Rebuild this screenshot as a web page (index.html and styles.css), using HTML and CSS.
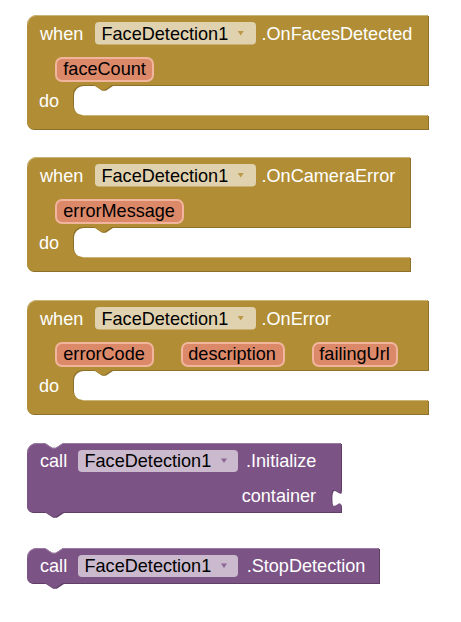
FILE: index.html
```html
<!DOCTYPE html>
<html lang="en">
<head>
<meta charset="utf-8">
<title>FaceDetection1 blocks</title>
<link rel="stylesheet" href="styles.css">
</head>
<body>
<div class="workspace">

  <svg class="block" width="403" height="114" viewBox="0 0 403 114">
    <path class="ev-dark" transform="translate(1,1)" d="M0,9.6 A9.6,9.6 0 0 1 9.6,0 H401 V70 H85 l-7.2,4.8 h-3.6 l-7.2,-4.8 H55.6 A9.6,9.6 0 0 0 46,79.6 V90.4 A9.6,9.6 0 0 0 55.6,100 H401 V114 H6 A6,6 0 0 1 0,108 Z"/>
    <path class="ev-fill" d="M0,9.6 A9.6,9.6 0 0 1 9.6,0 H401 V70 H85 l-7.2,4.8 h-3.6 l-7.2,-4.8 H55.6 A9.6,9.6 0 0 0 46,79.6 V90.4 A9.6,9.6 0 0 0 55.6,100 H401 V114 H6 A6,6 0 0 1 0,108 Z"/>
    <path class="ev-light" d="M0.5,9.6 A9.1,9.1 0 0 1 9.6,0.5 H400.5 M55.6,100.5 H400.5"/>
    <text class="lbl" x="13" y="25">when</text>
    <rect class="ev-field" x="68" y="7" width="161" height="22.5" rx="4"/>
    <text class="fld" x="74.5" y="25">FaceDetection1</text>
    <polygon class="ev-arrow" points="210.7,16 216.7,16 213.7,20.5"/>
    <text class="lbl" x="234.5" y="25">.OnFacesDetected</text>
    <rect class="param" x="29" y="43" width="97" height="23" rx="6"/>
    <text class="fld" x="36.3" y="59.5">faceCount</text>
    <text class="lbl" x="12" y="92">do</text>
  </svg>

  <svg class="block" width="385" height="115" viewBox="0 0 385 115">
    <path class="ev-dark" transform="translate(1,1)" d="M0,9.6 A9.6,9.6 0 0 1 9.6,0 H383 V70 H85 l-7.2,4.8 h-3.6 l-7.2,-4.8 H55.6 A9.6,9.6 0 0 0 46,79.6 V90.4 A9.6,9.6 0 0 0 55.6,100 H383 V114 H6 A6,6 0 0 1 0,108 Z"/>
    <path class="ev-fill" d="M0,9.6 A9.6,9.6 0 0 1 9.6,0 H383 V70 H85 l-7.2,4.8 h-3.6 l-7.2,-4.8 H55.6 A9.6,9.6 0 0 0 46,79.6 V90.4 A9.6,9.6 0 0 0 55.6,100 H383 V114 H6 A6,6 0 0 1 0,108 Z"/>
    <path class="ev-light" d="M0.5,9.6 A9.1,9.1 0 0 1 9.6,0.5 H382.5 M55.6,100.5 H382.5"/>
    <text class="lbl" x="13" y="25">when</text>
    <rect class="ev-field" x="68" y="7" width="161" height="22.5" rx="4"/>
    <text class="fld" x="74.5" y="25">FaceDetection1</text>
    <polygon class="ev-arrow" points="210.7,16 216.7,16 213.7,20.5"/>
    <text class="lbl" x="234.5" y="25">.OnCameraError</text>
    <rect class="param" x="29" y="43" width="127" height="23" rx="6"/>
    <text class="fld" x="36.3" y="59.5">errorMessage</text>
    <text class="lbl" x="12" y="92">do</text>
  </svg>

  <svg class="block" width="403" height="115" viewBox="0 0 403 115">
    <path class="ev-dark" transform="translate(1,1)" d="M0,9.6 A9.6,9.6 0 0 1 9.6,0 H401 V70 H85 l-7.2,4.8 h-3.6 l-7.2,-4.8 H55.6 A9.6,9.6 0 0 0 46,79.6 V90.4 A9.6,9.6 0 0 0 55.6,100 H401 V114 H6 A6,6 0 0 1 0,108 Z"/>
    <path class="ev-fill" d="M0,9.6 A9.6,9.6 0 0 1 9.6,0 H401 V70 H85 l-7.2,4.8 h-3.6 l-7.2,-4.8 H55.6 A9.6,9.6 0 0 0 46,79.6 V90.4 A9.6,9.6 0 0 0 55.6,100 H401 V114 H6 A6,6 0 0 1 0,108 Z"/>
    <path class="ev-light" d="M0.5,9.6 A9.1,9.1 0 0 1 9.6,0.5 H400.5 M55.6,100.5 H400.5"/>
    <text class="lbl" x="13" y="25">when</text>
    <rect class="ev-field" x="68" y="7" width="161" height="22.5" rx="4"/>
    <text class="fld" x="74.5" y="25">FaceDetection1</text>
    <polygon class="ev-arrow" points="210.7,16 216.7,16 213.7,20.5"/>
    <text class="lbl" x="234.5" y="25">.OnError</text>
    <rect class="param" x="29" y="43" width="97" height="23" rx="6"/>
    <text class="fld" x="36.3" y="59.5">errorCode</text>
    <rect class="param" x="155" y="43" width="102" height="23" rx="6"/>
    <text class="fld" x="161.3" y="59.5">description</text>
    <rect class="param" x="286" y="43" width="84" height="23" rx="6"/>
    <text class="fld" x="292.3" y="59.5">failingUrl</text>
    <text class="lbl" x="12" y="92">do</text>
  </svg>

  <svg class="block" width="316" height="77" viewBox="0 0 316 77">
    <path class="me-dark" transform="translate(1,1)" d="M0,9.6 A9.6,9.6 0 0 1 9.6,0 H18 l7.2,4.8 h3.6 l7.2,-4.8 H314 V40 v6 c0,12 -9.6,-9.6 -9.6,9 s9.6,-3 9.6,9 V69 H36 l-7.2,4.8 h-3.6 l-7.2,-4.8 H5 A5,5 0 0 1 0,64 Z"/>
    <path class="me-fill" d="M0,9.6 A9.6,9.6 0 0 1 9.6,0 H18 l7.2,4.8 h3.6 l7.2,-4.8 H314 V40 v6 c0,12 -9.6,-9.6 -9.6,9 s9.6,-3 9.6,9 V69 H36 l-7.2,4.8 h-3.6 l-7.2,-4.8 H5 A5,5 0 0 1 0,64 Z"/>
    <path class="me-light" d="M0.5,9.6 A9.1,9.1 0 0 1 9.6,0.5 H18 l7.2,4.8 h3.6 l7.2,-4.8 H313.5"/>
    <text class="lbl" x="13" y="23.7">call</text>
    <rect class="me-field" x="51" y="7" width="160" height="22" rx="4"/>
    <text class="fld" x="57.5" y="23.7">FaceDetection1</text>
    <polygon class="me-arrow" points="194,15.5 200,15.5 197,20"/>
    <text class="lbl" x="219" y="23.7">.Initialize</text>
    <text class="lbl" x="214.7" y="58.7">container</text>
  </svg>

  <svg class="block" width="354" height="42" viewBox="0 0 354 42">
    <path class="me-dark" transform="translate(1,1)" d="M0,9.6 A9.6,9.6 0 0 1 9.6,0 H18 l7.2,4.8 h3.6 l7.2,-4.8 H352 V35 H36 l-7.2,4.8 h-3.6 l-7.2,-4.8 H5 A5,5 0 0 1 0,30 Z"/>
    <path class="me-fill" d="M0,9.6 A9.6,9.6 0 0 1 9.6,0 H18 l7.2,4.8 h3.6 l7.2,-4.8 H352 V35 H36 l-7.2,4.8 h-3.6 l-7.2,-4.8 H5 A5,5 0 0 1 0,30 Z"/>
    <path class="me-light" d="M0.5,9.6 A9.1,9.1 0 0 1 9.6,0.5 H18 l7.2,4.8 h3.6 l7.2,-4.8 H351.5"/>
    <text class="lbl" x="13" y="23.7">call</text>
    <rect class="me-field" x="51" y="7" width="160" height="22" rx="4"/>
    <text class="fld" x="57.5" y="23.7">FaceDetection1</text>
    <polygon class="me-arrow" points="194,15.5 200,15.5 197,20"/>
    <text class="lbl" x="219.7" y="23.7">.StopDetection</text>
  </svg>

</div>
</body>
</html>
```

FILE: styles.css
```css
html, body {
  margin: 0;
  padding: 0;
  background: #ffffff;
}

.workspace {
  display: flex;
  flex-direction: column;
  align-items: flex-start;
  gap: 28px;
  padding: 15px 0 0 27px;
}

.block {
  display: block;
  overflow: visible;
}

.block text {
  font-family: "Liberation Sans", Arial, sans-serif;
  font-size: 18.1px;
}

.lbl {
  fill: #ffffff;
}

.fld {
  fill: #000000;
}

/* event (ochre) blocks */
.ev-fill { fill: #b18e35; }
.ev-dark { fill: #8d7029; }
.ev-light { fill: none; stroke: #cdb57a; stroke-width: 1; }
.ev-field { fill: #e0d2ae; }
.ev-arrow { fill: #b18e35; opacity: 0.85; }

/* method (purple) blocks */
.me-fill { fill: #7c5385; }
.me-dark { fill: #5f3f66; }
.me-light { fill: none; stroke: #9a7aa2; stroke-width: 1; }
.me-field { fill: #cbbace; }
.me-arrow { fill: #7c5385; opacity: 0.8; }

/* event parameter pills */
.param {
  fill: #dc896a;
  stroke: #f1b59d;
  stroke-width: 2;
}
```
